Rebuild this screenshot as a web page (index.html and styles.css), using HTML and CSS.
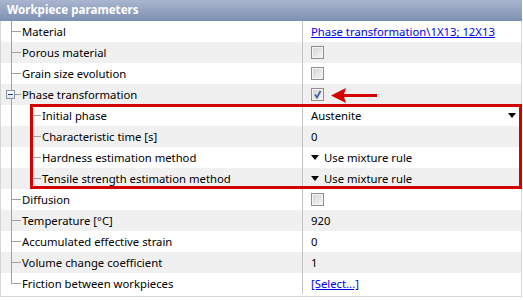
FILE: index.html
```html
<!DOCTYPE html>
<html>
<head>
<meta charset="utf-8">
<link rel="stylesheet" href="styles.css">
</head>
<body>
<div class="panel">
  <div class="header">Workpiece parameters</div>
  <div class="grid">
    <div class="row">
      <div class="name"><span class="gutter g-branch"></span><span>Material</span></div>
      <div class="value"><a class="link">Phase transformation\1X13; 12X13</a></div>
    </div>
    <div class="row alt">
      <div class="name"><span class="gutter g-branch"></span><span>Porous material</span></div>
      <div class="value"><span class="check"></span></div>
    </div>
    <div class="row">
      <div class="name"><span class="gutter g-branch"></span><span>Grain size evolution</span></div>
      <div class="value"><span class="check"></span></div>
    </div>
    <div class="row alt">
      <div class="name"><span class="gutter g-branch g-node"><span class="minus"></span></span><span>Phase transformation</span></div>
      <div class="value"><span class="check checked"><svg viewBox="0 0 13 13" width="13" height="13"><path d="M4 6.5 L6 9.5 L9.5 3" fill="none" stroke="#4b5f9a" stroke-width="1.8"/></svg></span></div>
    </div>
    <div class="row">
      <div class="name"><span class="gutter g-child"></span><span>Initial phase</span></div>
      <div class="value spread"><span>Austenite</span><span class="tri"></span></div>
    </div>
    <div class="row alt">
      <div class="name"><span class="gutter g-child"></span><span>Characteristic time [s]</span></div>
      <div class="value"><span>0</span></div>
    </div>
    <div class="row">
      <div class="name"><span class="gutter g-child"></span><span>Hardness estimation method</span></div>
      <div class="value"><span class="tri tri-left"></span><span>Use mixture rule</span></div>
    </div>
    <div class="row alt">
      <div class="name"><span class="gutter g-child"></span><span>Tensile strength estimation method</span></div>
      <div class="value"><span class="tri tri-left"></span><span>Use mixture rule</span></div>
    </div>
    <div class="row">
      <div class="name"><span class="gutter g-branch"></span><span>Diffusion</span></div>
      <div class="value"><span class="check"></span></div>
    </div>
    <div class="row alt">
      <div class="name"><span class="gutter g-branch"></span><span>Temperature [°C]</span></div>
      <div class="value"><span>920</span></div>
    </div>
    <div class="row">
      <div class="name"><span class="gutter g-branch"></span><span>Accumulated effective strain</span></div>
      <div class="value"><span>0</span></div>
    </div>
    <div class="row alt">
      <div class="name"><span class="gutter g-branch"></span><span>Volume change coefficient</span></div>
      <div class="value"><span>1</span></div>
    </div>
    <div class="row">
      <div class="name"><span class="gutter g-last"></span><span>Friction between workpieces</span></div>
      <div class="value"><a class="link">[Select...]</a></div>
    </div>
  </div>
  <div class="highlight"></div>
  <svg class="arrow" width="46" height="15" viewBox="0 0 46 15"><path d="M0 7.5 L15 0 L13 6 L46 6 L46 9 L13 9 L15 15 Z" fill="#d40000"/></svg>
</div>
</body>
</html>
```

FILE: styles.css
```css
html, body {
  margin: 0;
  padding: 0;
  background: #fff;
}
body {
  font-family: "Noto Sans", "Open Sans", sans-serif;
  font-size: 11.3px;
  color: #000;
}
.panel {
  position: relative;
  width: 522px;
  height: 297px;
  box-sizing: border-box;
}
.header {
  height: 21px;
  line-height: 20px;
  padding-left: 7px;
  font-weight: bold;
  font-size: 11.6px;
  color: #fff;
  background: linear-gradient(#aab6cf, #7e8fb2);
}
.grid {
  border-left: 1px solid #d6d6d6;
  border-right: 1px solid #d6d6d6;
  border-bottom: 1px solid #d6d6d6;
  padding-bottom: 2px;
}
.row {
  display: flex;
  height: 21px;
  line-height: 21px;
}
.row.alt {
  background: #f0f0f0;
}
.name {
  width: 301px;
  flex: none;
  display: flex;
  border-right: 1px solid #c4c4c4;
  white-space: nowrap;
}
.gutter {
  flex: none;
  width: 21px;
  height: 21px;
}
.g-branch {
  background:
    linear-gradient(#a0a0a0, #a0a0a0) 10px 0 / 1px 100% no-repeat,
    linear-gradient(#a0a0a0, #a0a0a0) 10px 10px / 10px 1px no-repeat;
}
.g-last {
  background:
    linear-gradient(#a0a0a0, #a0a0a0) 10px 0 / 1px 11px no-repeat,
    linear-gradient(#a0a0a0, #a0a0a0) 10px 10px / 10px 1px no-repeat;
}
.g-child {
  width: 41px;
  background:
    linear-gradient(#a0a0a0, #a0a0a0) 10px 0 / 1px 100% no-repeat,
    linear-gradient(#a0a0a0, #a0a0a0) 30px 0 / 1px 100% no-repeat,
    linear-gradient(#a0a0a0, #a0a0a0) 30px 10px / 10px 1px no-repeat;
}
.g-node {
  display: flex;
  align-items: center;
  padding-left: 5px;
  box-sizing: border-box;
}
.minus {
  width: 9px;
  height: 9px;
  box-sizing: border-box;
  border: 1px solid #8c96a8;
  background:
    linear-gradient(#1f3c88, #1f3c88) 1px 3px / 5px 1px no-repeat,
    linear-gradient(#fff, #e4e4e4);
}
.value {
  flex: 1;
  display: flex;
  align-items: center;
  padding-left: 8px;
  padding-right: 5px;
  white-space: nowrap;
}
.spread {
  justify-content: space-between;
}
.link {
  color: #0000ee;
  text-decoration: underline;
}
.check {
  width: 13px;
  height: 13px;
  box-sizing: border-box;
  border: 1px solid #8e8e8e;
  background:
    linear-gradient(135deg, #d2d2d2, #f6f6f6);
  box-shadow: inset 0 0 0 1px #f4f4f4;
  display: block;
}
.check svg {
  display: block;
  margin: -1px;
}
.tri {
  width: 0;
  height: 0;
  border-left: 4.5px solid transparent;
  border-right: 4.5px solid transparent;
  border-top: 5px solid #000;
}
.tri-left {
  margin-right: 5px;
}
.highlight {
  position: absolute;
  left: 30px;
  top: 104px;
  width: 492px;
  height: 85px;
  box-sizing: border-box;
  border: 3px solid #d40000;
}
.arrow {
  position: absolute;
  left: 331px;
  top: 88px;
}
```
